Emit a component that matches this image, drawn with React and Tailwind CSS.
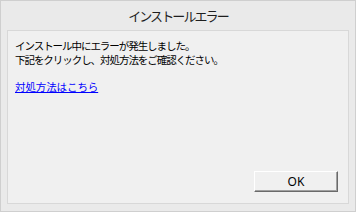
const jp = { fontFamily: '"Noto Sans CJK JP", "Noto Sans", sans-serif' };

const ErrorDialog = () => {
  return (
    <div className="w-[356px] h-[212px] border border-[#cfcfcf] bg-[#eaeaea] flex flex-col" style={jp}>
      <div className="h-[29px] flex items-center justify-center text-[13px] tracking-[-1.9px] text-[#1e1e1e]">
        インストールエラー
      </div>
      <div className="flex-1 px-[6px] pb-[7px] flex">
        <div className="flex-1 border border-[#d8d8d8] bg-[#f0f0f0] flex flex-col">
          <div className="pl-[7px] pt-[8px] text-[10.5px] leading-[14px] tracking-[-1.05px] text-black">
            <p>インストール中にエラーが発生しました。</p>
            <p>下記をクリックし、対処方法をご確認ください。</p>
            <a href="#" className="block mt-[13px] tracking-[-0.1px] text-[#0000ff] underline">
              対処方法はこちら
            </a>
          </div>
          <div className="mt-auto flex justify-end pr-[10px] pb-[11px]">
            <button
              type="button"
              className="w-[84px] h-[21px] bg-[#f0f0f0] border-t border-l border-white border-b border-r border-b-[#6a6a6a] border-r-[#6a6a6a] shadow-[inset_-1px_-1px_0_#a0a0a0] text-[12px] text-black flex items-center justify-center"
              style={{ fontFamily: '"Noto Sans", sans-serif' }}
            >
              OK
            </button>
          </div>
        </div>
      </div>
    </div>
  );
};

export default function App() {
  return <ErrorDialog />;
}
